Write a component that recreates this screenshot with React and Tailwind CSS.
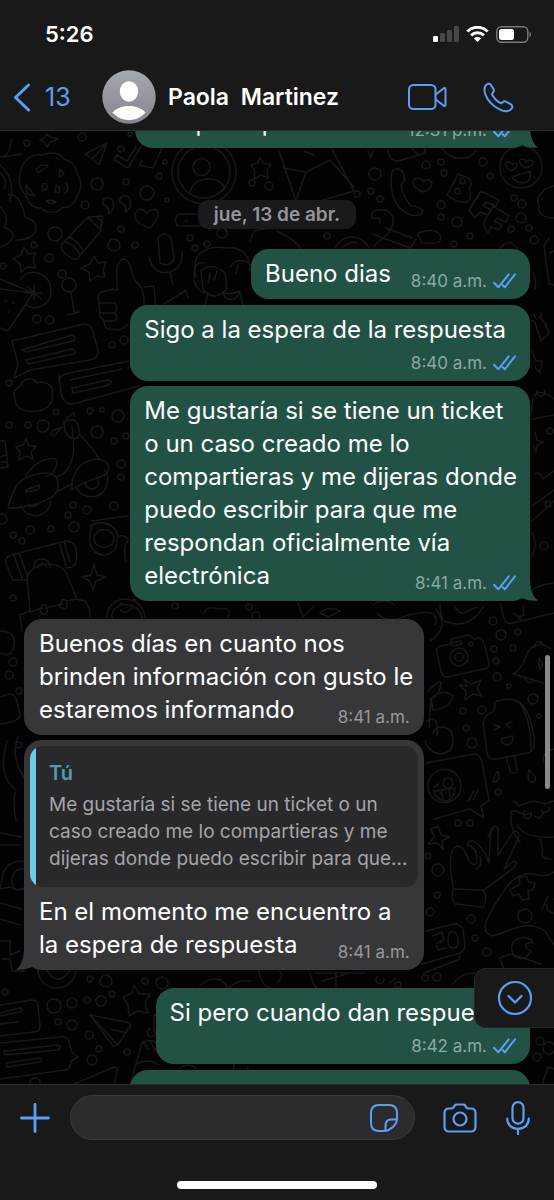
const BUBBLES = [
  [27, 142, 3], [82, 136, 4], [130, 133, 2], [121, 148, 3], [165, 161, 2], [97, 183, 6], [126, 181, 3],
  [147, 192, 7], [167, 199, 2], [159, 175, 3], [85, 204, 4], [55, 233, 7], [121, 228, 3], [114, 244, 6],
  [135, 244, 3], [34, 244, 3], [49, 257, 4], [62, 273, 4], [3, 265, 3], [37, 318, 4], [50, 319, 4],
  [190, 237, 3], [195, 247, 3], [207, 243, 3], [222, 232, 5], [252, 182, 3], [269, 185, 4], [112, 344, 3],
  [124, 339, 4], [375, 173, 6], [357, 193, 3], [371, 190, 3], [380, 198, 3], [426, 164, 4], [441, 161, 3],
  [444, 172, 3], [483, 161, 4], [490, 175, 3], [441, 204, 4], [441, 216, 3], [457, 221, 5], [454, 243, 3],
  [470, 235, 3], [514, 197, 3], [522, 203, 4], [521, 217, 5], [529, 227, 3], [511, 228, 3], [534, 239, 4],
  [327, 235, 3], [9, 382, 3], [9, 424, 3], [28, 424, 3], [43, 425, 6], [56, 411, 3], [90, 410, 3],
  [102, 409, 2], [118, 415, 6], [97, 431, 6], [114, 440, 3], [126, 435, 3], [121, 463, 4], [121, 476, 3],
  [2, 518, 5], [73, 504, 3], [87, 509, 4], [68, 514, 3], [114, 505, 4], [30, 529, 4], [13, 534, 3],
  [51, 528, 3], [22, 540, 3], [74, 526, 5], [13, 597, 3], [175, 605, 3], [249, 606, 3], [256, 615, 4],
  [550, 430, 3], [544, 545, 4], [548, 503, 3], [13, 661, 4], [9, 674, 4], [19, 690, 3], [19, 744, 3],
  [493, 620, 4], [501, 634, 5], [494, 648, 3], [513, 647, 3], [518, 631, 3], [496, 660, 3], [497, 676, 4],
  [509, 685, 2], [533, 698, 5], [463, 710, 3], [482, 709, 4], [466, 727, 3], [472, 742, 5], [539, 715, 2],
  [498, 791, 3], [458, 822, 3], [470, 822, 3], [438, 869, 6], [428, 855, 3], [437, 894, 3], [430, 911, 4],
  [471, 918, 4], [475, 937, 3], [487, 951, 4], [425, 977, 3], [437, 976, 4], [398, 984, 3], [90, 978, 3],
  [106, 980, 6], [145, 980, 3], [162, 982, 6], [54, 1005, 7], [72, 1002, 5], [87, 999, 3], [101, 1000, 5],
  [112, 993, 3], [58, 1021, 3], [72, 1024, 5], [89, 1034, 4], [99, 1048, 3], [92, 1059, 5], [127, 1051, 3],
  [35, 1082, 5], [5, 991, 3], [540, 1040, 4], [549, 1047, 6], [537, 1056, 4],
];

const DOODLES = [
  // moon
  "M22 165c6-10 12-13 20-11 8-4 18-2 22 4 8 2 13 8 13 15 6 8 4 16 0 22-2 8-8 12-15 12-6 6-16 5-21 0-9 0-14-6-15-13-8-7-8-18-4-29z",
  "M36 168q6-6 12-3l-10 7zM60 168l4 5-5 3zM26 184l9 11-8-2zM43 183q5-2 4 5l-5 2zM56 184q5 2 3 8l-4-1zM66 182q4 6-1 10M46 200q6-2 10 1-6 3-10-1z",
  // head edge and flower on the left
  "M0 156q10 0 11-18M4 156l18-3M0 164q16 14 10 36M0 172q8 8 4 16M8 194q12-2 17 22 14 4 10 15-4 8-18 8M0 206q10 10 4 20 10 4 9 10-4 8-13 10",
  // paper plane, ticks
  "M85 153l22-11-8 22-7-6zM92 158l15-16M114 159l14 8 17-28M114 159l3-5 10 6 9-14M139 164l14 3 9-20M139 164l3-4",
  // quotes, heart, pen, mic
  "M103 203c-2-8 9-8 10-2 2 6-1 10-5 12q3-6-5-10zM120 201c-2-8 9-8 10-2 2 6-1 10-5 12q3-6-5-10z",
  "M150 227c-14-4-18-12-13-17 3-3 8-2 10 3 3-6 10-6 11-1 1 5-4 10-8 15z",
  "M62 243l26-27 14-1-1 15-24 28q-4 2-14-8-3-3-1-7zM66 241q8 3 14 12M69 236q9 4 14 13M88 216l13 13M97 216l5 5",
  "M158 237q6-8 13 0l3 20q-3 10-14 5zM149 256c3 14 12 17 20 15s14-8 13-21M170 271l3 12",
  // stars
  "M24 246l4 7 8-1-3 8 3 7-9-1-6 5-1-9-7-4 8-4zM94 255l4 7 8-1-3 8 2 7-8-1-7 5-1-9-8-4 9-4zM260 156l4 7 7 0-4 6 1 8-7-3-7 4 1-8-4-6 7-2z",
  "M26 438l3 7 7 0-5 6 2 7-7-3-7 4 1-8-4-5 7-2zM134 984l5 9 11 0-5 9 3 10-10-2-9 5-1-11-5-8 9-4z",
  // thumbs up
  "M117 280q-2-19 6-22 6 0 8 10l4 12q10 6 9 26l-10 6M117 282q2 10-4 6l-8 2q-10 2-6 10 0 6 1 9-2 8 4 10 0 8 4 9l12 1 8-6M99 302h16q4 6-1 10h-14M101 312h14q4 5 0 8h-12M144 286l10-1 2 24",
  // cocktail
  "M0 278l33 14-25 38-8-3M0 288l33 4M20 279c8-14 32-8 31 12-1 14-16 20-26 12M34 284v15M27 285l14 13M26 292h16M69 284m-7 0a7 7 0 1 0 14 0a7 7 0 1 0-14 0M71 291l3 20M67 314l12-3M5 300h1M13 302h1M8 311h1",
  // speech notes
  "M12 340l72-17q8 0 9 8l5 19q0 8-8 9l-60 10-16 8 4-14zM22 349l50-15q6 3 1 6l-47 11zM26 359l46-11q6 3 1 5l-45 10zM59 374l2 18q2 11 12 11l66-18M59 380q0-6 10-8l60-12M70 379l52-11M73 392l36-8q5-4-1-5l-36 8z",
  // potato cloud
  "M15 398c-3-8 2-12 6-13 0-8 12-9 16-3 10-3 18 4 15 12 2 10-8 16-15 16-12 2-22-3-22-12z",
  // scooter
  "M8 506c6-20 10-26 20-30 14-6 28-6 30 5 2 14-10 18-22 22-16 4-26 6-28 3zM26 475q8-14 22-17 10-2 9 5-4 12-10 12M57 476q22-8 15-50M64 421q12-6 14 4 4 12-4 13-10-2-10-17zM62 426l-8 9q-6-2 0-6zM66 418q10-10 8-3M80 434q14 14 19 24M72 489c-2-20 14-34 30-30 8 2 8 10 4 14-10 6-22 6-34 16zM58 490l14-7M77 488c6 10 26 12 30-5 2-8 0-12-3-14M85 482a7 7 0 1 0 12-6M20 504c8 16 28 14 31-4M28 503q6 6 12-2M26 489l13-5q2 2-2 5l-11 2z",
  "M0 440l5 0 3 26-8 1M0 456l7-2M0 461h6",
  // glasses
  "M90 525q14-8 25 3 4 6 2 14c-2 16-25 16-27-1-1-8 0-10 2-16zM94 537a10 9 0 1 1 20 1 10 9 0 1 1-20-1zM92 520l36-5M118 536q4-4 10 2M128 540q-6 6-2 20",
  // skateboard, backpack
  "M7 565q-4-8 4-11l55-14q8 0 10 8 3 14-4 18l-6 1M7 565l6 14 14 0M14 554l8 23M19 552l8 22M60 543l6 22M64 541l6 20M34 567q0-10 8-9t8 8M37 567q5-8 10-1M27 577l3 32M27 577c4-18 36-18 40-3l10 24 8 2q6 8 5 16M30 611l12-4M46 607l16-4M66 600l11-2M42 604q4-2 5 4t-4 5-1-9zM62 599q4-2 5 4t-4 5-1-9zM22 630l-2-16 10-4",
  // sparkles
  "M94 563l3 11 9 2-10 4-3 9-3-9-8-4 9-2zM47 133l3 3 8 2-8 3-3 5-3-5-4-2 4-2zM464 678l7 5 10-4-4 9 5 7-9-2-8 6 1-9-7-6 8 1zM438 825l3 9 8 2-7 4 1 8-6-6-9 1 6-7-3-8zM535 431l2 8 6 2-6 3-1 7-3-7",
  // avocado
  "M107 618c-2-24 34-28 38-2 4 14 3 22 0 26M112 618c-2-18 26-20 30-1v12M120 603q3-2 4 1M132 599q3-2 4 1M120 609q6 5 12-2M204 612q2-8 14-4 16-2 10 8",
  // avatar circle
  "M172 171a32 32 0 1 1 64 0 32 32 0 1 1-64 0zM178 171a26 26 0 1 1 52 0 26 26 0 1 1-52 0zM193 166a8 8 0 1 1 17 0 8 8 0 1 1-17 0zM190 191q3-12 17-13t18 10",
  "M197 213h-18q-6 4-2 12l22 0M186 220h1M250 240l4-10 16-3",
  // laughing face
  "M196 276c-6-24 10-32 30-29 14-2 24 6 24 22M204 262q-10-2-10 12t10 18M201 270q10-10 24 2l2 16q-14 14-24 0zM230 266q8-12 22-2M208 282l2-10M214 280l3-10M236 273l2-9M222 291q8 4 18-1-4 12-14 7zM208 292l-4 16M240 292l4 16M164 303l22-14 2 8",
  // envelope
  "M279 150l17 50q2 8 10 4l48-14-22-42M283 167l23 4 24-12 24 27M306 171l-10 28M304 150l10 4",
  "M388 149q2 14 14 10l20-6q4-2 2-6M412 147q8 12 14 2M442 147q8 12 22 10 8 0 12-8M368 150l3 6 2-6",
  // handset and heart
  "M392 171q4-6 10-1 6 8-1 14 2 12 10 21 8 0 12 5-2 6-12 4c-18-6-22-26-19-43zM423 191c-10-4-12-10-8-13 4-2 7 0 8 3 3-4 8-2 9 1 0 6-5 7-9 9z",
  // BFF
  "M447 194l11-21 10 4q6 4 1 11 4 8-2 13-8 2-20-7zM460 178q4-2 5 2t-5 2zM455 188q4-2 5 2t-5 2z",
  "M469 209l12-19 18 9-3 6-10-4-3 4 8 4-3 5-8-3-5 6zM483 223l10-18 16 10-3 6-9-4-3 3 8 4-3 5-8-3-3 6z",
  // smiling face, right edge
  "M500 166a21 21 0 1 1 42 0 21 21 0 1 1-42 0zM512 170c-8-4-8-9-4-9 3 0 4 2 4 3 3-4 7-1 5 2zM526 167c-8-4-8-9-4-9 3 0 4 2 4 3 5-4 9 0 6 3zM512 176l18-6q2 10-6 12-8 0-12-6z",
  "M554 185q-10 2-11 6-8 6-4 14-2 8 7 11l8 1M549 237l-5 8 5 38 5 1M554 250l-4 2",
  // bicycle
  "M373 218q-4-8 5-9 12-2 15 8 2 10-10 20l-9 8M373 218q8-4 7 4M386 227l26 10M372 233l38 14M418 232q18-6 22 2 2 8-4 8h-14q-4-6-4-10zM335 247q8-14 22-10 8 2 12 10M342 247q8-8 16-5M410 248l6-10M277 230q20 10 24 18M500 248q4-8 12-6l6 6",
  // right edge strokes
  "M531 320q4-2 6 8l4 12 8-8-4-10-6-6M536 318l-2-5M541 316v-4M533 272q4 6 2 16M532 350l4 10h6l-2 12-5-6M554 398q-20-16-22 6l-1 10M537 390a4 4 0 1 0 7-1M533 418l21-4M535 473q4-4 8 5l11-8M532 505l22-16M532 520l22-20M532 556q6-14 0-24M532 590q4-6 22-8",
  "M500 603l4 14q2 7 9 5l41-10M514 612q4 6 10 2l-1-8M519 615l2 5M440 602q0 14 4 18 24 10 39-14M455 606q6 10 12 4l10-4M373 604q10-8 22 0M377 612q6 8 20 6 20-8 34-6 8 4 4 12M436 608q14 20-6 32M298 602l5 14 10-10M320 612q8-8 20-2l-12 6z",
  // camera
  "M437 652q-2-6 4-7l9-2 2-5 17-4 5 4 4-1q5 0 6 5l5 20q1 5-5 6l-37 8q-5 0-6-6zM450 656a9 9 0 1 1 18 0 9 9 0 1 1-18 0zM455 656a4 4 0 1 1 8 0 4 4 0 1 1-8 0zM451 642l10-2 1 3-10 2zM469 643a2 2 0 1 1 4 0 2 2 0 1 1-4 0z",
  // bell
  "M513 673q8-4 13-18 4-10 12-11 6-2 12 4M513 673l31 9M535 646a4 4 0 1 1 8-2M525 677q2 8 9 3M539 657q6 6 1 12-2-6-1-12z",
  // cherries
  "M428 690c8-8 12-10 13-9 0 8-4 14-10 17M431 697q14-10 22-2-2 12-20 14l-2-12-2 30M427 720q12-8 10 15M425 740c4 16 28 18 28 0s-18-16-20-8",
  // ice cream
  "M497 700q12-4 22 1 10 6 15 34 2 14-6 17l-32 6q-8 1-9-6l-4-30q2-10 8-10 6-6 3-10zM519 701q12 16 12 48M494 729l6-3-5-2M510 727l-4-4 6-2M501 738l12-3q0 8-5 9-6 0-7-6zM507 758l3 13q5 3 7-1l-2-14",
  // wink note
  "M426 762l48-9q6 0 8 8l7 38-8 6 3 12-14-9-36 10M428 785a16 16 0 1 1 33 0 16 16 0 1 1-33 0zM443 782a5 5 0 1 1 10 0 5 5 0 1 1-10 0zM434 790l21-3q0 10-8 13-10 0-13-10zM441 790l2 8M449 789l1 7M434 786l5-3M468 800l6-10M473 799l5-10",
  "M493 780q4-12 5-9 3 8-3 10zM529 769q10 8 5 12-8 2-5-12zM554 748q-14 4-10 14M520 841q-10-12-9-28-2-4 6-3 8 6 12 2M513 800q2 0 6 5 16-8 25-2l10-3M525 810a4 4 0 1 0 6 2M541 808a4 4 0 1 0 8-2M534 815l6 2 3-5M517 824q8 14 37 12M540 838l3 12q-4 8 8 8M488 836l6-10",
  // ok hand
  "M453 886q-6-34 2-40 8-4 14 14 8 8 8-2 0-12-10-14 4-12 18 8l4 10 2-34q4-6 7 0v26l16-24q6 0 4 8l-14 30 10-8q6 2-3 9-14 10-27 20M453 888l30 1q4 4 2 13l-2 4-28-3q-4-4-2-15zM480 856q3 8-4 12",
  // gamepad
  "M487 918q18-34 28-40 10-8 22-4 10 2 17-3M487 918q-6 14 6 17l26-9q16-4 26 4l9 14M513 887l7-4-1-6 7-2 3 6 6 1-2 7-5 1 1 8-7 1-3-6-6 2-3-6zM518 915a7 7 0 1 1 14 0 7 7 0 1 1-14 0zM542 908l6-13M547 904a7 7 0 1 0 7-6M512 950c-4-14 18-18 21-8-12-2-6 8-2 8-6 12-18 8-19 0zM499 957l12-4 30 10M500 957l4 12",
  // alarm clock
  "M426 930l28-7q7 0 9 6l2 14q0 7-5 9l-38 11M424 972l36-14-1-4M433 935l9-4 2 8-8 4 2 6 8-2M449 932q8-4 9 6 2 8-4 9-6 1-6-8z",
  "M277 982q8-8 2-12M310 972q4 20 20 22l36-4M314 972h52M336 972v14M322 980l28-8M378 975a4 4 0 1 0 6 3M396 977l-6 5M452 984q8-12 22-12l12 8",
  // left edge
  "M0 630q16 0 14 14t-14 8M0 696l9-3q6 0 8 8l3 14q-2 6-20 8M7 740q-10 34 8 48M18 736q-8 20 6 40M16 790q-4 10 0 30M0 832l22 4M0 844h20",
  "M24 860q-20 0-22 18l-2 10 10-2q6 4 14 2M24 868q-12 0-12 12t12 7M0 902l22 6M0 918l20 6M0 940h10v14l10-4M2 958h8l2 12h14M38 968c0 24 34 26 38 2M46 968q12 20 24 1",
  // paper planes and notes at the bottom
  "M90 1014l40 8q2 4-2 6l-10 16-5 1zM90 1014l28 30M111 1028l15 4M0 1004l32-5q6 0 6 6l2 20q0 6-6 6l-34 4M0 1012l20-5q4 2 0 4l-20 4M0 1023l18-2M0 1042l60-6q8-1 9 5l3 10 6 5-7 4q0 8-6 9l-65 9M4 1050l54-6q5 3-1 5l-52 5zM6 1062l34-5q4 2 0 4l-33 5zM72 1084l42-18q4 0 3 5l-3 13M130 1084l12-42q10-6 16 2M143 1040l5 8M150 1040l6 10M135 1064q12-8 24 0M154 1030v-15l6-3M150 1028a4 4 0 1 0 5 2",
  "M228 988q8-10 22-8M200 984q20-14 28 4M258 966q2 20 16 22M230 1084l4-20M245 1082l3-16M542 1084l6-18 6 2M180 1067q8-6 16 0",
];

function Wallpaper() {
  return (
    <svg
      className="absolute inset-0 h-full w-full"
      viewBox="0 130 554 954"
      preserveAspectRatio="xMidYMin slice"
      fill="none"
      stroke="#18181a"
      strokeWidth="1.5"
      strokeLinecap="round"
      strokeLinejoin="round"
      aria-hidden="true"
    >
      {DOODLES.map((d) => (
        <path key={d} d={d} />
      ))}
      {BUBBLES.map(([cx, cy, r]) => (
        <circle key={`${cx}-${cy}`} cx={cx} cy={cy} r={r} />
      ))}
    </svg>
  );
}

function Ticks() {
  return (
    <svg
      className="h-4 w-[23px]"
      viewBox="0 0 23 16"
      fill="none"
      stroke="#5b9ff0"
      strokeWidth="2"
      strokeLinecap="round"
      strokeLinejoin="round"
      aria-label="Leído"
    >
      <path d="M1 9.7L5.3 14.3L15.7 1.3M9.7 12.2L11.8 14.3L22 1.3" />
    </svg>
  );
}

function Tail({ mine }) {
  return mine ? (
    <svg className="absolute bottom-0 -right-2 h-6 w-4 text-[#225146]" viewBox="0 0 16 24" fill="currentColor" aria-hidden="true">
      <path d="M0 0H8C8 11 10 19 16 23.6C10 24.4 4 23 0 21Z" />
    </svg>
  ) : (
    <svg className="absolute bottom-0 -left-2 h-6 w-4 text-[#373739]" viewBox="0 0 16 24" fill="currentColor" aria-hidden="true">
      <path d="M16 0H8C8 11 6 19 0 23.6C6 24.4 12 23 16 21Z" />
    </svg>
  );
}

// The time floats to the right of the last line; with timeBelow it gets its own line.
function Message({ mine, text, time, timeBelow, quote, tail, className }) {
  return (
    <article
      className={`relative rounded-[18px] pb-1.5 text-white ${
        mine ? "self-end bg-[#225146]" : "self-start bg-[#373739]"
      } ${quote ? "pt-1.5" : "pt-2"} ${className}`}
    >
      {quote && (
        <blockquote className="mx-1.5 mb-2 flex overflow-hidden rounded-[13px] bg-[#29292b]">
          <div className="w-1.5 shrink-0 bg-[#6bcde9]" />
          <div className="pt-3.5 pb-[15px] pl-[13px]">
            <p className="text-[20px] leading-[27px] font-semibold text-[#4f9db5]">{quote.author}</p>
            <p className="mt-1 whitespace-pre-line text-[19px] leading-[27px] text-[#a4a4a9]">{quote.text}</p>
          </div>
        </blockquote>
      )}
      <div
        className={`flow-root whitespace-pre-line pr-2 text-[24px] leading-[33px] ${mine ? "pl-3.5" : "pl-[15px]"}`}
      >
        {text}
        {timeBelow && <br />}
        <span className={`float-right ml-5 flex h-6 items-center gap-1.5 pr-1.5 ${timeBelow ? "mt-[5px]" : "mt-3"}`}>
          <time className={`text-[17px] leading-6 ${mine ? "text-[#8ba9a2]" : "text-[#98989b]"}`}>{time}</time>
          {mine && <Ticks />}
        </span>
      </div>
      {tail && <Tail mine={mine} />}
    </article>
  );
}

function StatusBar() {
  return (
    <div className="flex items-center justify-between pt-5 pr-[22px] pl-[45px]">
      <time className="text-[22px] leading-7 font-semibold text-white">5:26</time>
      <div className="flex items-center gap-[7px]">
        <svg className="h-4 w-[26px]" viewBox="0 0 26 16" aria-hidden="true">
          <rect x="0" y="10" width="5" height="6" rx="1.2" fill="#fff" />
          <rect x="7" y="7" width="5" height="9" rx="1.2" fill="#474747" />
          <rect x="14" y="4" width="5" height="12" rx="1.2" fill="#474747" />
          <rect x="21" y="0" width="5" height="16" rx="1.2" fill="#474747" />
        </svg>
        <svg className="h-4 w-[23px]" viewBox="0 0 23 16" aria-hidden="true">
          <path d="M1.3 5.5a14.5 14.5 0 0 1 20.4 0M5.1 9.4a9.1 9.1 0 0 1 12.8 0" fill="none" stroke="#fff" strokeWidth="3" />
          <path d="M11.5 16L7.8 12.2a5.3 5.3 0 0 1 7.4 0z" fill="#fff" />
        </svg>
        <svg className="h-[17px] w-9" viewBox="0 0 36 17" aria-hidden="true">
          <rect x="0.8" y="0.8" width="31" height="15.4" rx="4.5" fill="none" stroke="#7c7c7c" strokeWidth="1.4" />
          <rect x="3" y="3" width="15" height="11" rx="2.5" fill="#fff" />
          <path d="M33.5 5.5q3 3 0 6z" fill="#7c7c7c" />
        </svg>
      </div>
    </div>
  );
}

function Header() {
  return (
    <header className="relative z-10 h-[131px] shrink-0 border-b border-[#2b2b2b] bg-[#191919]">
      <StatusBar />
      <div className="flex items-center pt-[22px] pr-10 pl-[13px]">
        <a href="#chats" className="flex w-[89px] items-center gap-3.5 text-[#5b9ff5]" aria-label="Chats, 13 sin leer">
          <svg className="h-[29px] w-[18px]" viewBox="0 0 18 29" fill="none" stroke="currentColor" strokeWidth="3" strokeLinecap="round" strokeLinejoin="round">
            <path d="M15.5 2L2.5 14.5L15.5 27" />
          </svg>
          <span className="text-[25px] leading-8">13</span>
        </a>
        <svg className="h-[54px] w-[54px] shrink-0" viewBox="0 0 54 54" aria-hidden="true">
          <defs>
            <linearGradient id="avatar" x1="0" y1="0" x2="0" y2="1">
              <stop offset="0" stopColor="#a6a8b2" />
              <stop offset="1" stopColor="#84858d" />
            </linearGradient>
          </defs>
          <circle cx="27" cy="27" r="26.7" fill="url(#avatar)" />
          <ellipse cx="27" cy="21.5" rx="9.2" ry="10.2" fill="#fff" />
          <path d="M10.5 42.5C14 38.5 20 36 27 36S40 38.5 43.5 42.5C39 47.5 33.5 50 27 50S15 47.5 10.5 42.5Z" fill="#fff" />
        </svg>
        <h1 className="ml-3 flex-1 whitespace-pre text-[23px] leading-8 font-semibold text-white">Paola  Martinez</h1>
        <div className="flex items-center gap-9 text-[#5b9ff5]">
          <button type="button" aria-label="Videollamada">
            <svg className="h-7 w-[39px]" viewBox="0 0 39 28" fill="none" stroke="currentColor" strokeWidth="2" strokeLinejoin="round">
              <rect x="1" y="2" width="26.5" height="24" rx="4.5" />
              <path d="M27.5 11.8L35.8 5.2Q37.5 4.3 37.5 6.2V21.8Q37.5 23.7 35.8 22.8L27.5 16.2" />
            </svg>
          </button>
          <button type="button" aria-label="Llamar">
            <svg className="h-[31px] w-[31px]" viewBox="0 0 94 94" fill="none" stroke="currentColor" strokeWidth="6" strokeLinejoin="round">
              <path d="M12 7C16 4 21 5 24 9L31 20C34 25 33 29 30 32L27 37C31 47 44 60 55 65L60 61C64 58 68 58 71 60L85 68C89 71 90 76 87 80C80 90 66 91 52 84C30 73 12 54 6 34C3 22 5 12 12 7Z" />
            </svg>
          </button>
        </div>
      </div>
    </header>
  );
}

function Composer() {
  return (
    <footer className="relative z-10 h-[116px] shrink-0 border-t border-[#2c2c2e] bg-[#191919] pt-2.5 text-[#5b9ff5]">
      <form className="flex items-center pr-6 pl-5">
        <button type="button" aria-label="Adjuntar">
          <svg className="h-[30px] w-[30px]" viewBox="0 0 30 30" stroke="currentColor" strokeWidth="2.8" strokeLinecap="round">
            <path d="M15 1.5V28.5M1.5 15H28.5" />
          </svg>
        </button>
        <div className="ml-5 flex h-[45px] min-w-0 flex-1 items-center rounded-full border border-[#3a3a3c] bg-[#2c2c2e] pr-4 pl-5">
          <input type="text" aria-label="Mensaje" className="min-w-0 flex-1 bg-transparent text-[22px] text-white outline-none" />
          <button type="button" aria-label="Stickers">
            <svg className="h-7 w-7" viewBox="0 0 28 28" fill="none" stroke="currentColor" strokeWidth="2" strokeLinejoin="round">
              <path d="M27 15V9Q27 1 19 1H9Q1 1 1 9V19Q1 27 9 27H14.5C20 27 27 20.5 27 15Z" />
              <path d="M15.5 27V22Q15.5 15.5 21 15.5H27" />
            </svg>
          </button>
        </div>
        <button type="button" aria-label="Cámara" className="ml-7">
          <svg className="h-[30px] w-[34px]" viewBox="0 0 34 30" fill="none" stroke="currentColor" strokeWidth="2.2" strokeLinejoin="round">
            <path d="M6 5.5H8.5Q10 5.5 11 3.8L11.8 2.5Q12.5 1.5 14 1.5H20Q21.5 1.5 22.2 2.5L23 3.8Q24 5.5 25.5 5.5H28Q32.5 5.5 32.5 10V23.5Q32.5 28.5 28 28.5H6Q1.5 28.5 1.5 23.5V10Q1.5 5.5 6 5.5Z" />
            <circle cx="17" cy="16" r="6.5" />
          </svg>
        </button>
        <button type="button" aria-label="Grabar audio" className="ml-[29px]">
          <svg className="h-[34px] w-6" viewBox="0 0 24 34" fill="none" stroke="currentColor" strokeWidth="2.2" strokeLinecap="round">
            <rect x="6.5" y="1.2" width="11" height="21.5" rx="5.5" />
            <path d="M1.2 17.5C1.2 24 6 27.8 12 27.8S22.8 24 22.8 17.5M12 28V33" />
          </svg>
        </button>
      </form>
      <div className="mx-auto mt-[41px] h-2 w-[36%] rounded-full bg-white" />
    </footer>
  );
}

export default function App() {
  return (
    <div className="flex h-screen flex-col overflow-hidden bg-[#020204] font-['Inter','Liberation_Sans',sans-serif]">
      <Header />
      <main className="relative min-h-0 flex-1 overflow-hidden">
        <Wallpaper />
        <div className="relative -mt-[33px] flex flex-col px-6">
          <Message mine tail className="w-[78%]" text="a la parte por" time="12:31 p.m." />
          <p className="mt-[52px] self-center rounded-[10px] bg-[#1a1a1d] px-4 text-[19px] leading-[29px] font-semibold text-[#959598]">
            jue, 13 de abr.
          </p>
          <Message mine className="mt-5" text="Bueno dias" time="8:40 a.m." />
          <Message mine timeBelow className="mt-1.5 w-[79%]" text="Sigo a la espera de la respuesta" time="8:40 a.m." />
          <Message
            mine
            tail
            className="mt-[5px] w-[79%]"
            text={"Me gustaría si se tiene un ticket\no un caso creado me lo\ncompartieras y me dijeras donde\npuedo escribir para que me\nrespondan oficialmente vía\nelectrónica"}
            time="8:41 a.m."
          />
          <Message
            className="mt-[18px] w-[79%]"
            text={"Buenos días en cuanto nos\nbrinden información con gusto le\nestaremos informando"}
            time="8:41 a.m."
          />
          <Message
            tail
            className="mt-[5px] w-[79%]"
            quote={{
              author: "Tú",
              text: "Me gustaría si se tiene un ticket o un\ncaso creado me lo compartieras y me\ndijeras donde puedo escribir para que...",
            }}
            text={"En el momento me encuentro a\nla espera de respuesta"}
            time="8:41 a.m."
          />
          <Message mine timeBelow className="mt-[18px] w-[74%]" text="Si pero cuando dan respuesta" time="8:42 a.m." />
          <Message mine timeBelow className="mt-1.5 w-[79%]" text="Aquí" time="8:42 a.m." />
        </div>
        <div className="absolute top-[55%] right-1 h-[134px] w-[5px] rounded-full bg-[#8a8a8c]" />
        <button
          type="button"
          aria-label="Ir al final"
          className="absolute right-0 bottom-14 flex h-[60px] w-20 items-center justify-center rounded-l-xl border border-r-0 border-[#262628] bg-[#19191a] text-[#5b9ff5]"
        >
          <svg className="h-9 w-9" viewBox="0 0 36 36" fill="none" stroke="currentColor" strokeWidth="2.2" strokeLinecap="round" strokeLinejoin="round">
            <circle cx="18" cy="18" r="16" />
            <path d="M11.5 16L18 22.5L24.5 16" />
          </svg>
        </button>
      </main>
      <Composer />
    </div>
  );
}
